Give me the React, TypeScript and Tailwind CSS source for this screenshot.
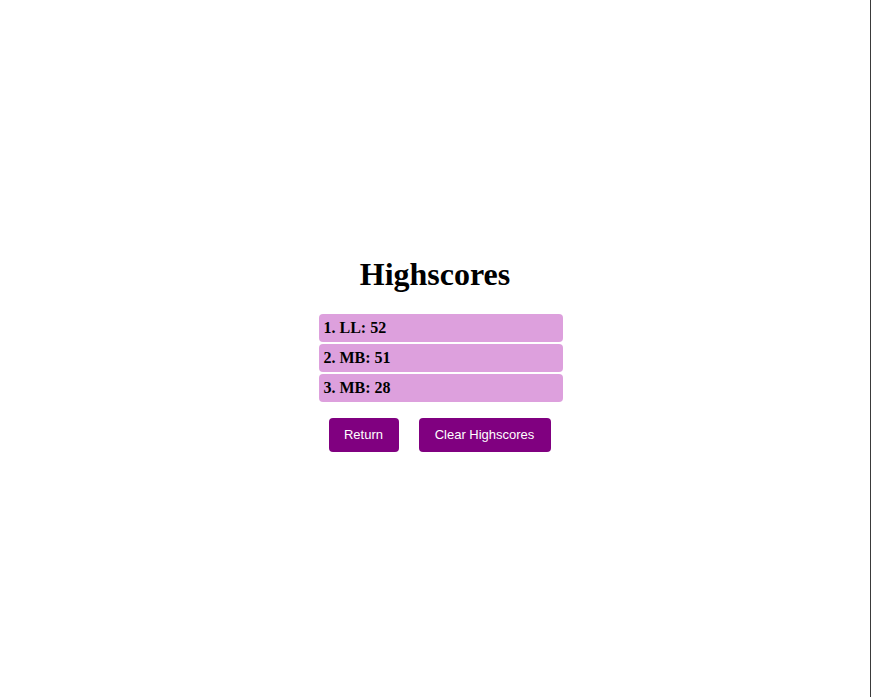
const scores = [
  { name: 'LL', score: 52 },
  { name: 'MB', score: 51 },
  { name: 'MB', score: 28 },
];

export default function App() {
  return (
    <div className="flex h-[697px] w-full flex-col items-center justify-center border-r border-[#3a3a3a] bg-white font-['Liberation_Serif',serif] text-black">
      <h1 className="mt-[20px] mb-[22px] text-[32px] font-bold leading-[36px]">Highscores</h1>
      <div className="ml-[11px] flex flex-col items-start">
        <ul className="w-[244px]">
          {scores.map((s, i) => (
            <li
              key={i}
              className="mb-[2px] flex h-[28px] items-center rounded-[4px] bg-[#dda0dd] px-[5px] pt-[1px] text-[16px] font-bold"
            >
              {i + 1}. {s.name}: {s.score}
            </li>
          ))}
        </ul>
        <div className="mt-[4px] flex">
          <button className="m-[10px] h-[34px] w-[70px] rounded-[4px] bg-[#800080] font-['Liberation_Sans',sans-serif] text-[13px] text-white">
            Return
          </button>
          <button className="m-[10px] h-[34px] w-[132px] rounded-[4px] bg-[#800080] font-['Liberation_Sans',sans-serif] text-[13px] text-white">
            Clear Highscores
          </button>
        </div>
      </div>
    </div>
  );
}
